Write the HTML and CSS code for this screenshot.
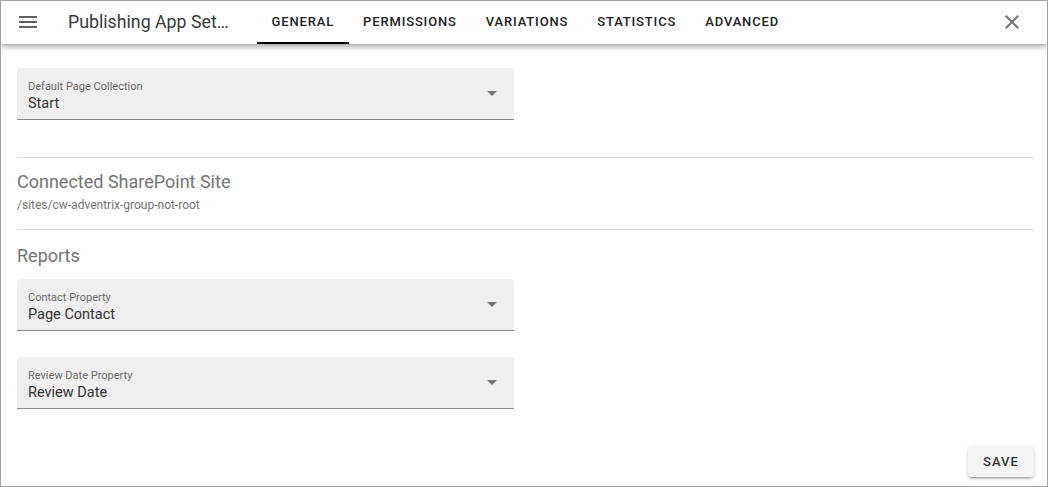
FILE: index.html
```html
<!DOCTYPE html>
<html>
<head>
<meta charset="utf-8">
<link rel="stylesheet" href="styles.css">
</head>
<body>
<div class="frame">
  <header class="topbar">
    <button class="icon-btn menu" aria-label="menu">
      <svg width="24" height="24" viewBox="0 0 24 24"><path d="M3 18h18v-2H3v2zm0-5h18v-2H3v2zm0-7v2h18V6H3z" fill="#616161"/></svg>
    </button>
    <div class="title">Publishing App Set…</div>
    <nav class="tabs">
      <div class="tab active">GENERAL</div>
      <div class="tab">PERMISSIONS</div>
      <div class="tab">VARIATIONS</div>
      <div class="tab">STATISTICS</div>
      <div class="tab">ADVANCED</div>
    </nav>
    <div class="spacer"></div>
    <button class="icon-btn close" aria-label="close">
      <svg width="24" height="24" viewBox="0 0 24 24"><path d="M19 6.41L17.59 5 12 10.59 6.41 5 5 6.41 10.59 12 5 17.59 6.41 19 12 13.41 17.59 19 19 17.59 13.41 12z" fill="#757575"/></svg>
    </button>
  </header>
  <main class="content">
    <div class="select first">
      <div class="select-text">
        <div class="select-label">Default Page Collection</div>
        <div class="select-value">Start</div>
      </div>
      <div class="arrow"></div>
    </div>
    <hr class="divider">
    <h2 class="section-title">Connected SharePoint Site</h2>
    <div class="section-sub">/sites/cw-adventrix-group-not-root</div>
    <hr class="divider second">
    <h2 class="section-title reports">Reports</h2>
    <div class="select">
      <div class="select-text">
        <div class="select-label">Contact Property</div>
        <div class="select-value">Page Contact</div>
      </div>
      <div class="arrow"></div>
    </div>
    <div class="select third">
      <div class="select-text">
        <div class="select-label">Review Date Property</div>
        <div class="select-value">Review Date</div>
      </div>
      <div class="arrow"></div>
    </div>
    <div class="actions">
      <button class="save">SAVE</button>
    </div>
  </main>
</div>
</body>
</html>
```
FILE: styles.css
```css
* { box-sizing: border-box; }
html, body { margin: 0; padding: 0; background: #fff; }
body { font-family: Roboto, "Noto Sans", Arial, sans-serif; }

.frame {
  width: 1048px;
  height: 487px;
  border: 1px solid #a3a3a3;
  display: flex;
  flex-direction: column;
  overflow: hidden;
}

.topbar {
  height: 43px;
  flex: none;
  display: flex;
  align-items: center;
  box-shadow: 0 2px 4px -1px rgba(0,0,0,0.2), 0 4px 5px 0 rgba(0,0,0,0.14), 0 1px 10px 0 rgba(0,0,0,0.12);
  position: relative;
  z-index: 1;
  padding-left: 15px;
  padding-right: 15px;
}

.icon-btn {
  border: 0;
  background: none;
  padding: 0;
  width: 24px;
  height: 24px;
  display: flex;
  align-items: center;
  justify-content: center;
  cursor: pointer;
}
.icon-btn.menu { margin-top: -1px; }
.icon-btn.close { margin-top: -1px; margin-right: 8px; }
.icon-btn svg { display: block; }

.title {
  margin-left: 28px;
  margin-top: -2px;
  font-size: 17.75px;
  color: #3a3a3a;
  width: 189px;
  white-space: nowrap;
}

.tabs {
  display: flex;
  align-self: stretch;
  margin-left: 0;
}
.tab {
  display: flex;
  align-items: center;
  padding: 0 14.5px;
  font-size: 13px;
  font-weight: 500;
  letter-spacing: 0.85px;
  color: #222;
  border-bottom: 2px solid transparent;
}
.tab.active { border-bottom-color: #000; }

.spacer { flex: 1; }

.content {
  flex: 1;
  padding: 24px 13px 9px 16px;
  display: flex;
  flex-direction: column;
}

.select {
  width: 497px;
  height: 52px;
  background: #efefef;
  border-radius: 4px 4px 0 0;
  border-bottom: 1px solid #8a8a8a;
  display: flex;
  align-items: center;
  padding: 0 17px 0 11px;
  flex: none;
}
.select-text { flex: 1; padding-top: 7px; }
.select-label {
  font-size: 11px;
  color: #6b6b6b;
  line-height: 14px;
}
.select-value {
  font-size: 14.5px;
  color: #333;
  line-height: 20px;
}
.arrow {
  width: 0;
  height: 0;
  border-left: 5px solid transparent;
  border-right: 5px solid transparent;
  border-top: 5px solid #757575;
  margin-top: -1px;
}

.select.third { margin-top: 26px; }

.divider {
  border: 0;
  border-top: 1px solid #e0e0e0;
  margin: 37px 0 0;
  width: 1017px;
}
.divider.second { margin-top: 16px; }

.section-title {
  margin: 12px 0 0;
  font-size: 18px;
  font-weight: 400;
  color: #757575;
  line-height: 24px;
}
.section-title.reports { margin-top: 14px; margin-bottom: 11px; }
.section-sub {
  font-size: 12px;
  color: #757575;
  line-height: 16px;
  margin-top: 3px;
}

.actions {
  margin-top: auto;
  display: flex;
  justify-content: flex-end;
  width: 1017px;
}
.save {
  width: 66px;
  height: 31px;
  border: 0;
  border-radius: 4px;
  background: #f5f5f5;
  box-shadow: 0 3px 1px -2px rgba(0,0,0,0.2), 0 2px 2px 0 rgba(0,0,0,0.14), 0 1px 5px 0 rgba(0,0,0,0.12);
  font-family: Roboto, "Noto Sans", Arial, sans-serif;
  font-size: 13px;
  font-weight: 500;
  letter-spacing: 1.1px;
  color: #333;
  padding: 0;
}
```
